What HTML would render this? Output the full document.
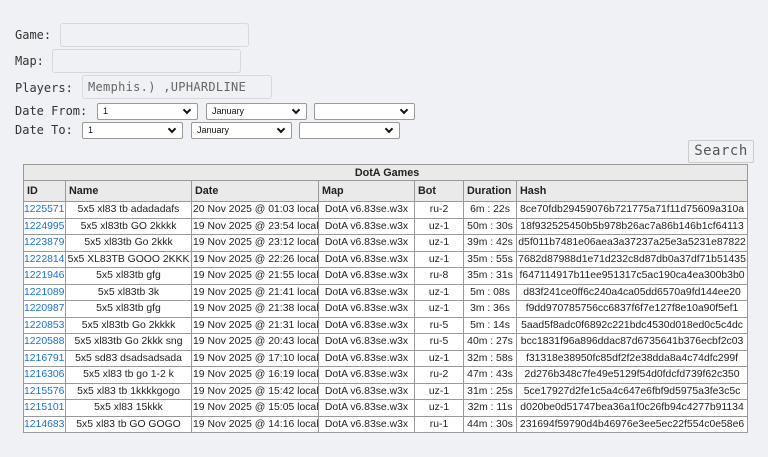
<!DOCTYPE html>
<html><head><meta charset="utf-8"><style>
body{margin:0;background:#f0f1f5;width:768px;height:457px;overflow:hidden;position:relative;font-family:"DejaVu Sans Mono","Liberation Mono",monospace;font-size:12px;color:#333}
.l{position:absolute;left:15px}
.in{position:absolute;height:24px;border:1px solid #d8d8dc;border-radius:3px;background:#f0f1f5;box-sizing:border-box;color:#666;font-size:12px;padding:4px 5px;letter-spacing:.3px}
.sel{position:absolute;height:17px;border:1px solid #999;border-radius:2px;background:#fff;box-sizing:border-box;font-family:"Liberation Sans",sans-serif;font-size:9px;padding:2px 5px;color:#111}
.sel:after{content:"";position:absolute;right:7px;top:3px;width:4px;height:4px;border-right:2px solid #111;border-bottom:2px solid #111;transform:rotate(45deg)}
.btn{position:absolute;left:688px;top:140px;width:66px;height:23px;border:1px solid #ccc;border-radius:2px;background:#f0f1f5;box-sizing:border-box;font-size:14px;color:#555;text-align:center;line-height:21px;letter-spacing:.5px}
table{position:absolute;left:23px;top:164px;width:724px;border-collapse:collapse;table-layout:fixed;font-family:"Liberation Sans",Arial,sans-serif;font-size:10.4px;color:#222}
td,th{border:1px solid #999;padding:0;white-space:nowrap;overflow:hidden;height:15.5px}
th{background:#eaeaea;text-align:left;font-weight:bold;height:20px;padding-left:3px;font-size:10.8px}
th.cap{text-align:center;height:15px}
td{background:#fff;text-align:center}
td.id{text-align:left;color:#1a6fd6}
td.d{text-align:left;padding-left:1px}
</style></head><body>
<div class="l" style="top:28px">Game:</div><div class="in" style="left:60px;top:23px;width:189px"></div>
<div class="l" style="top:54px">Map:</div><div class="in" style="left:52px;top:49px;width:189px"></div>
<div class="l" style="top:81px">Players:</div><div class="in" style="left:82px;top:75px;width:190px">Memphis.) ,UPHARDLINE</div>
<div class="l" style="top:104px">Date From:</div>
<div class="sel" style="left:97px;top:103px;width:101px">1</div>
<div class="sel" style="left:206px;top:103px;width:101px">January</div>
<div class="sel" style="left:314px;top:103px;width:101px"></div>
<div class="l" style="top:123px">Date To:</div>
<div class="sel" style="left:82px;top:122px;width:101px">1</div>
<div class="sel" style="left:191px;top:122px;width:101px">January</div>
<div class="sel" style="left:299px;top:122px;width:101px"></div>
<div class="btn">Search</div>
<table>
<colgroup><col style="width:42px"><col style="width:126px"><col style="width:127px"><col style="width:96px"><col style="width:49px"><col style="width:53px"><col style="width:231px"></colgroup>
<tr><th class="cap" colspan="7">DotA Games</th></tr>
<tr><th>ID</th><th>Name</th><th>Date</th><th>Map</th><th>Bot</th><th>Duration</th><th>Hash</th></tr>
<tr><td class="id">1225571</td><td>5x5 xl83 tb adadadafs</td><td class="d">20 Nov 2025 @ 01:03 local</td><td>DotA v6.83se.w3x</td><td>ru-2</td><td>6m : 22s</td><td>8ce70fdb29459076b721775a71f11d75609a310a</td></tr>
<tr><td class="id">1224995</td><td>5x5 xl83tb GO 2kkkk</td><td class="d">19 Nov 2025 @ 23:54 local</td><td>DotA v6.83se.w3x</td><td>uz-1</td><td>50m : 30s</td><td>18f932525450b5b978b26ac7a86b146b1cf64113</td></tr>
<tr><td class="id">1223879</td><td>5x5 xl83tb Go 2kkk</td><td class="d">19 Nov 2025 @ 23:12 local</td><td>DotA v6.83se.w3x</td><td>uz-1</td><td>39m : 42s</td><td>d5f011b7481e06aea3a37237a25e3a5231e87822</td></tr>
<tr><td class="id">1222814</td><td>5x5 XL83TB GOOO 2KKK</td><td class="d">19 Nov 2025 @ 22:26 local</td><td>DotA v6.83se.w3x</td><td>uz-1</td><td>35m : 55s</td><td>7682d87988d1e71d232c8d87db0a37df71b51435</td></tr>
<tr><td class="id">1221946</td><td>5x5 xl83tb gfg</td><td class="d">19 Nov 2025 @ 21:55 local</td><td>DotA v6.83se.w3x</td><td>ru-8</td><td>35m : 31s</td><td>f647114917b11ee951317c5ac190ca4ea300b3b0</td></tr>
<tr><td class="id">1221089</td><td>5x5 xl83tb 3k</td><td class="d">19 Nov 2025 @ 21:41 local</td><td>DotA v6.83se.w3x</td><td>uz-1</td><td>5m : 08s</td><td>d83f241ce0ff6c240a4ca05dd6570a9fd144ee20</td></tr>
<tr><td class="id">1220987</td><td>5x5 xl83tb gfg</td><td class="d">19 Nov 2025 @ 21:38 local</td><td>DotA v6.83se.w3x</td><td>uz-1</td><td>3m : 36s</td><td>f9dd970785756cc6837f6f7e127f8e10a90f5ef1</td></tr>
<tr><td class="id">1220853</td><td>5x5 xl83tb Go 2kkkk</td><td class="d">19 Nov 2025 @ 21:31 local</td><td>DotA v6.83se.w3x</td><td>ru-5</td><td>5m : 14s</td><td>5aad5f8adc0f6892c221bdc4530d018ed0c5c4dc</td></tr>
<tr><td class="id">1220588</td><td>5x5 xl83tb Go 2kkk sng</td><td class="d">19 Nov 2025 @ 20:43 local</td><td>DotA v6.83se.w3x</td><td>ru-5</td><td>40m : 27s</td><td>bcc1831f96a896ddac87d6735641b376ecbf2c03</td></tr>
<tr><td class="id">1216791</td><td>5x5 sd83 dsadsadsada</td><td class="d">19 Nov 2025 @ 17:10 local</td><td>DotA v6.83se.w3x</td><td>uz-1</td><td>32m : 58s</td><td>f31318e38950fc85df2f2e38dda8a4c74dfc299f</td></tr>
<tr><td class="id">1216306</td><td>5x5 xl83 tb go 1-2 k</td><td class="d">19 Nov 2025 @ 16:19 local</td><td>DotA v6.83se.w3x</td><td>ru-2</td><td>47m : 43s</td><td>2d276b348c7fe49e5129f54d0fdcfd739f62c350</td></tr>
<tr><td class="id">1215576</td><td>5x5 xl83 tb 1kkkkgogo</td><td class="d">19 Nov 2025 @ 15:42 local</td><td>DotA v6.83se.w3x</td><td>uz-1</td><td>31m : 25s</td><td>5ce17927d2fe1c5a4c647e6fbf9d5975a3fe3c5c</td></tr>
<tr><td class="id">1215101</td><td>5x5 xl83 15kkk</td><td class="d">19 Nov 2025 @ 15:05 local</td><td>DotA v6.83se.w3x</td><td>uz-1</td><td>32m : 11s</td><td>d020be0d51747bea36a1f0c26fb94c4277b91134</td></tr>
<tr><td class="id">1214683</td><td>5x5 xl83 tb GO GOGO</td><td class="d">19 Nov 2025 @ 14:16 local</td><td>DotA v6.83se.w3x</td><td>ru-1</td><td>44m : 30s</td><td>231694f59790d4b46976e3ee5ec22f554c0e58e6</td></tr>
</table>
</body></html>
